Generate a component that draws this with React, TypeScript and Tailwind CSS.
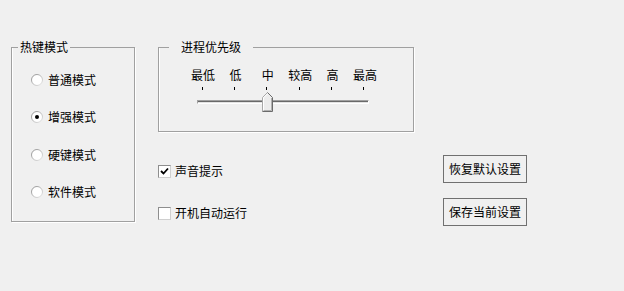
import React from "react";

const F = "font-['Noto_Sans_CJK_SC','Noto_Sans',sans-serif]";

function Radio({ checked }: { checked?: boolean }) {
  return (
    <svg width="12" height="12" viewBox="0 0 12 12" className="shrink-0">
      <defs>
        <linearGradient id="rg" x1="0" y1="0" x2="1" y2="1">
          <stop offset="0" stopColor="#8c8c8c" />
          <stop offset="1" stopColor="#e8e8e8" />
        </linearGradient>
      </defs>
      <circle cx="6" cy="6" r="5.5" fill="#ffffff" stroke="url(#rg)" />
      {checked && <circle cx="6" cy="6" r="2" fill="#000000" />}
    </svg>
  );
}

function Check({ checked }: { checked?: boolean }) {
  return (
    <div className="w-[13px] h-[13px] shrink-0 bg-white border border-t-[#8e8e8e] border-l-[#8e8e8e] border-r-[#cfcfcf] border-b-[#cfcfcf] flex items-center justify-center">
      {checked && (
        <svg width="9" height="9" viewBox="0 0 9 9">
          <path d="M1 4 L3.5 6.5 L8 1.5" stroke="#000" strokeWidth="1.8" fill="none" />
        </svg>
      )}
    </div>
  );
}

function Thumb() {
  return (
    <svg width="11" height="20" viewBox="0 0 11 20">
      <path d="M0.5 5.5 L5.5 0.5 L10.5 5.5 V19.5 H0.5 Z" fill="#ececec" />
      <path d="M1.5 19 V5.8 L5.5 1.8" stroke="#ffffff" fill="none" />
      <path d="M0.5 19.5 V5.5 L5.5 0.5" stroke="#a8a8a8" fill="none" />
      <path d="M5.5 0.5 L10.5 5.5 V19.5 H0.5" stroke="#6b6b6b" fill="none" />
      <path d="M9.5 6 V18.5 H1.5" stroke="#b0b0b0" fill="none" />
    </svg>
  );
}

const levels = ["最低", "低", "中", "较高", "高", "最高"];

export default function App() {
  return (
    <div className={`w-[624px] h-[291px] bg-[#f0f0f0] text-black text-[12px] leading-[14px] ${F} flex pl-[11px] pt-[40px]`}>
      <fieldset className="w-[124px] h-[182px] border border-[#a0a0a0] shadow-[1px_1px_0_#ffffff,inset_1px_0_0_#ffffff]">
        <legend className="ml-[6px] px-[2px] leading-[14px]">热键模式</legend>
        <div className="flex flex-col gap-[21.4px] pl-[19px] pt-[18px]">
          {[
            ["普通模式", false],
            ["增强模式", true],
            ["硬键模式", false],
            ["软件模式", false],
          ].map(([t, c]) => (
            <div key={t as string} className="flex items-center gap-[5px] h-[16px]">
              <Radio checked={c as boolean} />
              <span>{t as string}</span>
            </div>
          ))}
        </div>
      </fieldset>

      <div className="flex flex-col ml-[23px]">
        <fieldset className="w-[256px] h-[92px] border border-[#a0a0a0] shadow-[1px_1px_0_#ffffff,inset_1px_0_0_#ffffff]">
          <legend className="ml-[10px] px-[12px] leading-[14px]">进程优先级</legend>
          <div className="ml-[38px] w-[172px] pt-[14px] flex flex-col">
            <div className="px-[5px] flex justify-between h-[14px]">
              {levels.map((l) => (
                <div key={l} className="w-0 flex justify-center whitespace-nowrap">
                  <span className="pl-[2px]">{l}</span>
                </div>
              ))}
            </div>
            <div className="px-[5px] flex justify-between h-[3px] mt-[5px]">
              {levels.map((l) => (
                <div key={l} className="w-px h-[3px] bg-black" />
              ))}
            </div>
            <div className="relative h-[20px] mt-[2px] flex items-center">
              <div className="w-full h-[4px] border-t border-l border-t-[#a0a0a0] border-l-[#a0a0a0] border-b border-r border-b-white border-r-white bg-[#e3e3e3] shadow-[inset_0_1px_0_#696969]" />
              <div className="absolute left-[65px] top-0">
                <Thumb />
              </div>
            </div>
          </div>
        </fieldset>

        <div className="flex">
          <div className="w-[285px] pt-[32px] flex flex-col gap-[28px]">
            <div className="flex items-center gap-[4px] h-[14px]">
              <Check checked />
              <span>声音提示</span>
            </div>
            <div className="flex items-center gap-[4px] h-[14px]">
              <Check />
              <span>开机自动运行</span>
            </div>
          </div>
          <div className="pt-[23px] flex flex-col gap-[15px]">
            <button className="w-[84px] h-[28px] border border-[#707070] bg-[#f0f0f0] flex items-center justify-center">
              恢复默认设置
            </button>
            <button className="w-[84px] h-[28px] border border-[#707070] bg-[#f0f0f0] flex items-center justify-center">
              保存当前设置
            </button>
          </div>
        </div>
      </div>
    </div>
  );
}
